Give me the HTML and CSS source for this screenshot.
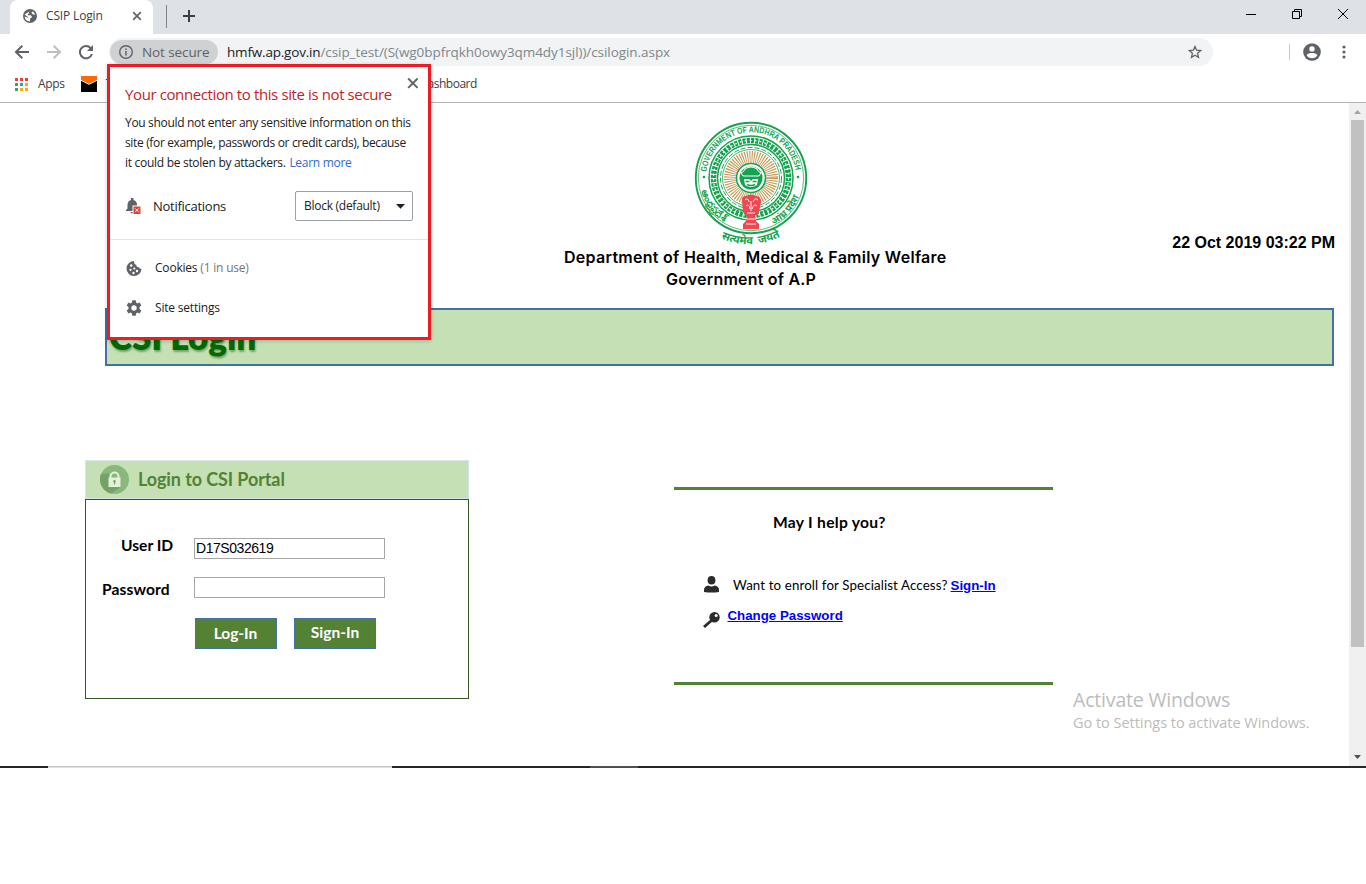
FILE: index.html
```html
<!DOCTYPE html>
<html lang="en">
<head>
<meta charset="utf-8">
<title>CSIP Login</title>
<link rel="stylesheet" href="styles.css">
</head>
<body>
<div class="window">
  <div class="tabstrip">
    <div class="tab">
      <svg class="tab-globe" viewBox="0 0 14 14"><circle cx="7" cy="7" r="7" fill="#5f6368"/><path d="M7.600 1.500 5.600 3 6.200 4.200 4.600 5.200 5 6.200H7.800L9.200 8 7.200 9.600 6.800 12.400A5.600 5.600 0 0 1 1.600 7.400L4.400 8.600 5.600 9.800 4.800 8 1.600 5.600M9 2.200 8.600 4.200 10 5.600 12.300 5.400A6 6 0 0 0 9 2.200" fill="#fff"/></svg>
      <span class="tab-title">CSIP Login</span>
      <svg class="tab-close" viewBox="0 0 10 10"><path d="M1.200 1.200 8.800 8.800M8.800 1.200 1.200 8.800" stroke="#5f6368" stroke-width="1.700"/></svg>
    </div>
    <span class="tab-divider"></span>
    <svg class="new-tab" viewBox="0 0 12 12"><path d="M6 0V12M0 6H12" stroke="#3c4043" stroke-width="2"/></svg>
    <div class="window-controls">
      <svg width="11" height="11" viewBox="0 0 11 11"><path d="M0 5.500H10" stroke="#000"/></svg>
      <svg width="11" height="11" viewBox="0 0 11 11"><path d="M.5 2.500h7v7h-7zM2.500 2.500v-2h7v7h-2" fill="none" stroke="#000"/></svg>
      <svg width="11" height="11" viewBox="0 0 11 11"><path d="M0 0l10 10M10 0l-10 10" stroke="#000"/></svg>
    </div>
  </div>

  <div class="toolbar">
    <svg class="nav" width="16" height="16" viewBox="0 0 16 16"><path d="M15 8H2M8.300 1.800 2 8 8.300 14.200" fill="none" stroke="#5f6368" stroke-width="2"/></svg>
    <svg class="nav" width="16" height="16" viewBox="0 0 16 16"><path d="M1 8H14M7.700 1.800 14 8 7.700 14.200" fill="none" stroke="#bdbfc1" stroke-width="2"/></svg>
    <svg class="nav" width="16" height="16" viewBox="0 0 16 16"><path d="M13.900 10A6.100 6.100 0 1 1 12.600 4.100" fill="none" stroke="#5f6368" stroke-width="2"/><path d="M15 1V7H9z" fill="#5f6368"/></svg>
    <div class="omnibox">
      <div class="site-chip">
        <svg width="14" height="14" viewBox="0 0 14 14"><circle cx="7" cy="7" r="6.300" fill="none" stroke="#5f6368" stroke-width="1.400"/><path d="M7 6V10.500M7 3.400V5" stroke="#5f6368" stroke-width="1.500"/></svg>
        <span>Not secure</span>
      </div>
      <span class="url"><b>hmfw.ap.gov.in</b>/csip_test/(S(wg0bpfrqkh0owy3qm4dy1sjl))/csilogin.aspx</span>
      <svg class="star" width="14" height="14" viewBox="0 0 14 14"><path d="M7 1.500 8.600 5.200 12.700 5.600 9.600 8.300 10.500 12.300 7 10.200 3.500 12.300 4.400 8.300 1.300 5.600 5.400 5.200Z" fill="none" stroke="#5f6368" stroke-width="1.300"/></svg>
    </div>
    <span class="bar-divider"></span>
    <svg class="avatar" width="18" height="18" viewBox="0 0 18 18"><circle cx="9" cy="9" r="8.800" fill="#5f6368"/><circle cx="9" cy="5.900" r="2.700" fill="#fff"/><path d="M3.600 12.300C4.300 10.500 7 9.900 9 9.900s4.700.6 5.400 2.400A6.400 6.400 0 0 1 9 15.300a6.400 6.400 0 0 1-5.400-3z" fill="#fff"/></svg>
    <svg class="dots" width="4" height="14" viewBox="0 0 4 14"><g fill="#5f6368"><circle cx="2" cy="2" r="1.600"/><circle cx="2" cy="7" r="1.600"/><circle cx="2" cy="12" r="1.600"/></g></svg>
  </div>

  <div class="bookmarks">
    <svg width="13" height="13" viewBox="0 0 13 13"><path d="M0 0h3v3H0zM5 0h3v3H5zM10 0h3v3h-3z" fill="#ea4335"/><path d="M0 5h3v3H0zM0 10h3v3H0z" fill="#34a853"/><path d="M5 5h3v3H5z" fill="#4285f4"/><path d="M10 5h3v3h-3zM5 10h3v3H5zM10 10h3v3h-3z" fill="#fbab05"/></svg>
    <span class="apps">Apps</span>
    <svg class="mail" width="16" height="16" viewBox="0 0 16 16"><path d="M0 0H16V16H0z" fill="#000"/><path d="M0 0H16V4L8 8 0 4z" fill="#ff6a00"/><path d="M0 4.300 8 8.300 16 4.300" fill="none" stroke="#fff" stroke-width="1"/></svg>
    <span class="bookmark">T</span>
    <span class="bookmark dashboard">Dashboard</span>
  </div>

  <div class="viewport">
    <main class="page">
      <header class="masthead">
        <svg class="emblem" width="124" height="128" viewBox="-62 -58 124 128">
          <defs>
            <path id="arc-top" d="M-44.800 -5A45 45 0 0 1 44.800 -5"/>
            <path id="arc-left" d="M-51 7A51.500 51.500 0 0 0 -12 50.100"/>
            <path id="arc-right" d="M19 48A51.500 51.500 0 0 0 51 7"/>
            <path id="arc-motto" d="M-31 60Q0 74 33 57"/>
          </defs>
          <g fill="none" stroke="#16a34f">
            <circle r="55.200" stroke-width="1.900"/>
            <circle r="52.700" stroke-width=".7"/>
            <circle r="42" stroke-width="1.500"/>
            <circle r="37.500" stroke-width="5.500" stroke-dasharray="3.200 1"/>
            <circle r="37.500" stroke="#fff" stroke-width="1.200" stroke-dasharray="2 3"/>
            <circle r="33.500" stroke-width="1.500"/>
            <circle r="30.500" stroke-width="1" stroke-dasharray="5 2"/>
            <circle r="28.500" stroke-width=".8"/>
          </g>
          <circle r="21" fill="none" stroke="#c49a54" stroke-width="12" stroke-dasharray="1.050 1.149"/>
          <circle r="14.500" fill="#fff" stroke="#16a34f" stroke-width="1.500"/>
          <circle r="11.500" fill="#16a34f"/>
          <path d="M-10-5Q-7-6-6-9Q0-13 6-9Q7-6 10-5L8-2H-8z" fill="#16a34f" stroke="#fff" stroke-width="1"/>
          <path d="M-7 1H-2L0 3 2 1H7L6 7Q0 11-6 7z" fill="#fff"/>
          <path d="M-5.500 3.500H-1.500M5.500 3.500H1.500M-4 6.500Q0 8.500 4 6.500" stroke="#16a34f" stroke-width="1.600" fill="none"/>
          <path d="M-9 21Q-9 18-5 18Q0 15 5 18Q10 18 10 24L8 34 4 38 5 43 8 46V51H-8V46L-5 43-4 38-8 34z" fill="#ef4651"/>
          <path d="M-6 22Q-3 19-2 24M2 24Q4 19 7 22M-5 28Q-2 25-1 31M1 31Q3 25 6 28M-4 35H4M-5 41H5M-5 46H5M0 23V33" stroke="#fff" stroke-width=".9" fill="none"/>
          <text class="emblem-name"><textPath href="#arc-top" startOffset="1" textLength="129" lengthAdjust="spacingAndGlyphs">GOVERNMENT OF ANDHRA PRADESH</textPath></text>
          <circle cx="-47" cy="-1" r="1.300" fill="#16a34f"/><circle cx="47" cy="-1" r="1.300" fill="#16a34f"/>
          <text class="emblem-local"><textPath href="#arc-left" startOffset="6">ఆంధ్రప్రదేశ్</textPath></text>
          <text class="emblem-local"><textPath href="#arc-right" startOffset="4">आंध्र प्रदेश</textPath></text>
          <text class="emblem-motto"><textPath href="#arc-motto" startOffset="1">सत्यमेव जयते</textPath></text>
        </svg>
        <div class="dept">Department of Health, Medical &amp; Family Welfare</div>
        <div class="govt">Government of A.P</div>
        <time class="clock">22 Oct 2019 03:22 PM</time>
      </header>

      <h1 class="banner"><span>CSI Login</span></h1>

      <div class="columns">
        <section class="login">
          <h2 class="login-head">
            <svg width="29" height="29" viewBox="0 0 29 29"><circle cx="14.500" cy="14.500" r="14.500" fill="#8ab87a"/><path d="M9 8.500 1 9A14.500 14.500 0 0 0 11 28.500L21 22 9 22z" fill="#75a265"/><path d="M8.500 12.500h12v9.500h-12z" fill="#e3f1da"/><path d="M10.500 13V11.500a4 4 0 0 1 8 0V13" fill="none" stroke="#e3f1da" stroke-width="2"/><circle cx="14.500" cy="16.300" r="1.200" fill="#75a265"/><path d="M14.500 16v3.500" stroke="#75a265" stroke-width="1.200"/></svg>
            <span>Login to CSI Portal</span>
          </h2>
          <div class="login-body">
            <label class="field"><span class="user-label">User ID</span><input type="text" value="D17S032619"></label>
            <label class="field second"><span class="pass-label">Password</span><input type="password"></label>
            <div class="buttons"><button type="button" class="log-in"><span>Log-In</span></button><button type="button"><span>Sign-In</span></button></div>
          </div>
        </section>

        <section class="help">
          <h2 class="help-title">May I help you?</h2>
          <div class="help-row">
            <svg class="person" width="15" height="17" viewBox="0 0 15 17"><ellipse cx="7.500" cy="4.300" rx="3.900" ry="4.300" fill="#2b2b2b"/><path d="M0 16V14Q0 10 4.500 9.500Q7.500 11.300 10.500 9.500Q15 10 15 14V16Q7.500 17.200 0 16z" fill="#2b2b2b"/></svg>
            <span class="enroll">Want to enroll for Specialist Access?</span>
            <a href="#" class="sign-link">Sign-In</a>
          </div>
          <div class="help-row change">
            <svg class="key" width="17" height="16" viewBox="0 0 17 16"><circle cx="11.500" cy="5.300" r="5.200" fill="#2b2b2b"/><path d="M9 8 1 15" stroke="#2b2b2b" stroke-width="2.800"/><circle cx="13.200" cy="3.600" r="1.500" fill="#fff"/></svg>
            <a href="#">Change Password</a>
          </div>
        </section>
      </div>
      <div class="activate"><div class="activate-title">Activate Windows</div><div class="activate-text">Go to Settings to activate Windows.</div></div>
    </main>
    <div class="scrollbar">
      <svg width="17" height="17" viewBox="0 0 17 17"><path d="M5 11 8.500 7 12 11z" fill="#a3a3a3"/></svg>
      <div class="thumb"></div>
      <svg class="down" width="17" height="17" viewBox="0 0 17 17"><path d="M5 6H12L8.500 10z" fill="#505050"/></svg>
    </div>
  </div>
  <div class="taskbar"><span class="task-light"></span><span class="task-grey"></span></div>

  <div class="site-info">
    <div class="info-main">
      <svg class="info-close" width="11" height="11" viewBox="0 0 11 11"><path d="M1.200.5 10.600 9.900M10.600.5 1.200 9.900" stroke="#5f6368" stroke-width="2"/></svg>
      <div class="info-title">Your connection to this site is not secure</div>
      <div class="info-text"><div class="l1">You should not enter any sensitive information on this</div><div class="l2">site (for example, passwords or credit cards), because</div><div class="l3">it could be stolen by attackers. <a href="#">Learn more</a></div></div>
      <div class="permission">
        <svg width="15" height="17" viewBox="0 0 15 17"><path d="M0 13V12L1.500 10.500V7Q1.500 3 5 2V0H7.500V2Q11 3 11 7V13zM4.500 14H8Q7 16 6 15.500Q5 15.500 4.500 14z" fill="#5f6368"/><path d="M6.500 7.500H15V17H6.500z" fill="#fff"/><path d="M7.500 8.500H14.500V16H7.500z" fill="#db4437"/><path d="M9.300 10.500l3.400 3.400M12.700 10.500 9.300 13.900" stroke="#fff" stroke-width="1"/></svg>
        <span class="notif">Notifications</span>
        <div class="select"><span>Block (default)</span><svg width="9" height="5" viewBox="0 0 9 5"><path d="M0 0H9L4.500 4.800z" fill="#202124"/></svg></div>
      </div>
    </div>
    <div class="info-links">
      <div class="info-row">
        <svg width="15" height="15" viewBox="0 0 15 15"><path d="M7.500 0A7.500 7.500 0 1 0 15 7.800Q12.800 8 12.400 6.200Q9.800 6.500 9.800 4Q7.200 3.500 7.500 0z" fill="#5f6368"/><g fill="#fff"><circle cx="4.700" cy="4.500" r="1.200"/><circle cx="4" cy="8.800" r="1.100"/><circle cx="7.800" cy="7.500" r="1.100"/><circle cx="10.500" cy="10" r="1.200"/><circle cx="7" cy="12" r="1.200"/></g></svg>
        <span class="cookies">Cookies <em>(1 in use)</em></span>
      </div>
      <div class="info-row">
        <svg width="16" height="16" viewBox="0 0 16 16"><path d="M6.300.3h3.400l.4 2.300 1.300.8 2.200-.9 1.700 2.900-1.800 1.500v2.200l1.800 1.500-1.700 2.900-2.200-.9-1.300.8-.4 2.300H6.300l-.4-2.300-1.300-.8-2.200.9-1.700-2.900 1.800-1.500V6.900L.7 5.400l1.700-2.900 2.200.9 1.300-.8z" fill="#5f6368"/><circle cx="8" cy="8" r="2.700" fill="#fff"/></svg>
        <span class="settings">Site settings</span>
      </div>
    </div>
  </div>
</div>
</body>
</html>
```
FILE: styles.css
```css
* { box-sizing: border-box; }
body { margin: 0; background: #fff; font-family: "Open Sans", "Noto Sans", sans-serif; color: #202124; white-space: nowrap; }
svg { display: block; flex: none; }
h1, h2 { margin: 0; }
.window { position: relative; width: 1366px; height: 768px; display: flex; flex-direction: column; overflow: hidden; }

/* Browser chrome */
.tabstrip { height: 34px; background: #dee1e6; display: flex; align-items: flex-start; padding-left: 10px; }
.tab { width: 143px; height: 34px; background: #fff; border-radius: 8px 8px 0 0; display: flex; align-items: center; padding: 0 11px 2px 13px; }
.tab-globe { width: 14px; height: 14px; }
.tab-title { margin: -2px 0 0 9px; font-size: 12px; letter-spacing: -.15px; color: #3c4043; flex: 1; }
.tab-close { width: 10px; height: 10px; }
.tab-divider { width: 1px; height: 23px; margin: 5px 0 0 13px; background: #808489; }
.new-tab { width: 12px; height: 12px; margin: 10px 0 0 16px; }
.window-controls { margin: 9px 17px 0 auto; display: flex; gap: 35px; }
.toolbar { height: 34px; display: flex; align-items: center; padding: 2px 17px 0 14px; }
.nav { margin-right: 16px; }
.omnibox { width: 1104px; height: 28px; margin-left: -1px; border-radius: 14px; background: #f1f3f4; display: flex; align-items: center; font-size: 14px; }
.site-chip { width: 108px; height: 24px; margin-left: 1px; border-radius: 12px; background: #cfd1d2; display: flex; align-items: center; gap: 9px; padding-left: 9px; color: #5f6368; font-size: 13.500px; letter-spacing: -.1px; }
.url { margin-left: 9px; color: #80868b; font-size: 13.500px; letter-spacing: -.06px; }
.url b { font-weight: 400; color: #202124; letter-spacing: -.19px; }
.star { margin: 0 11px 0 auto; }
.bar-divider { width: 1px; height: 16px; margin-left: 76px; background: #c6c8ca; }
.avatar { margin-left: 13px; }
.dots { margin-left: auto; margin-right: 3px; }
.bookmarks { height: 35px; border-bottom: 1px solid #b6b4b6; display: flex; align-items: center; padding: 0 0 2px 15px; font-size: 12px; color: #3c4043; }
.bookmarks span { margin-top: -1px; }
.apps { margin-left: 10px; letter-spacing: -.3px; }
.mail { margin: 0 9px 0 16px; }
.bookmarks .dashboard { margin-left: 307px; letter-spacing: -.5px; }

/* Page */
.viewport { height: 663px; display: flex; }
.page { width: 1349px; }
.masthead { height: 205px; display: grid; grid-template-columns: 564px 382px 1fr; grid-template-rows: 143px 22px 22px; font-family: Inter, sans-serif; font-weight: 600; color: #000; }
.emblem { grid-column: 2; grid-row: 1; margin: 17px 0 0 125px; }
.dept { grid-column: 2; grid-row: 2; font-size: 16px; line-height: 22px; letter-spacing: .28px; }
.govt { grid-column: 2; grid-row: 3; font-size: 16px; line-height: 22px; margin-left: 102px; letter-spacing: .2px; }
.clock { grid-column: 3; grid-row: 1; justify-self: end; align-self: end; margin: 0 14px -7px 0; font: bold 16px/20px "Liberation Sans", sans-serif; }
.emblem-name { font: bold 8.500px "Liberation Sans", sans-serif; fill: #16a34f; }
.emblem-local { font: bold 9.500px "Noto Sans", sans-serif; fill: #16a34f; }
.emblem-motto { font: bold 11.200px "Noto Sans", sans-serif; word-spacing: 3px; fill: #16a34f; }
.banner { width: 1229px; height: 58px; margin-left: 105px; border: 2px solid #4171a5; background: #c5e0b4; padding-left: 2px; font: 800 35px/53px Lato, sans-serif; color: #006a00; text-shadow: 1px 2px 2px #7ba06f; }
.columns { display: flex; padding: 94px 0 0 85px; }
.login { width: 384px; }
.login-head { height: 39px; border: 1px solid #d5e4ee; background: #c5e0b4; display: flex; align-items: center; gap: 9px; padding-left: 14px; font: bold 18px Lato, sans-serif; letter-spacing: -.1px; color: #548235; }
.login-head span { margin-top: -1px; }
.login-body { height: 200px; border: 1px solid #375623; padding-top: 38px; }
.field { display: flex; height: 21px; align-items: flex-start; font: bold 15.600px/16px Lato, sans-serif; color: #000; }
.field span { width: 108px; }
.field .user-label { padding-left: 35px; margin-top: -1px; }
.pass-label { padding: 4px 0 0 16px; letter-spacing: .1px; }
.field input { width: 191px; height: 21px; border: 1px solid #a6a6a6; padding: 0 1px 1px; font: 14px "Liberation Sans", sans-serif; letter-spacing: -.45px; border-radius: 0; background: #fff; color: #000; }
.second { margin-top: 18px; }
.buttons { display: flex; gap: 17px; margin: 20px 0 0 109px; }
.buttons button { width: 82px; height: 31px; padding: 0 0 4px; border: 1px solid #4171a5; border-radius: 0; background: #548235; color: #fff; font: bold 15.500px Lato, sans-serif; }
.buttons .log-in { padding: 0 1px 2px 0; }
.help { width: 379px; height: 198px; margin: 27px 0 0 205px; border-top: 3px solid #548235; border-bottom: 3px solid #548235; color: #000; }
.help-title { margin: 21px 0 0 99px; font: bold 15.600px/22px Lato, sans-serif; letter-spacing: .3px; }
.help-row { display: flex; align-items: center; height: 20px; margin: 42px 0 0 30px; font: 13.300px/20px Lato, sans-serif; }
.help-row a { color: #00f; font: bold 13.300px/20px "Liberation Sans", sans-serif; padding-top: 1px; }
.person { margin-top: -2px; }
.enroll { margin: 0 3px 0 14px; letter-spacing: .12px; }
.change { margin-top: 10px; }
.change .key { margin: 9px 0 0 -1px; }
.change a { margin-left: 7.500px; }
.activate { margin: -12px 0 0 1073px; color: #bcbcbc; }
.activate-title { font-size: 19.500px; line-height: 26px; letter-spacing: -.18px; }
.activate-text { font-size: 14.500px; line-height: 20px; letter-spacing: -.03px; }
.scrollbar { width: 17px; background: #f0f0f0; display: flex; flex-direction: column; }
.thumb { width: 13px; height: 527px; margin-left: 2px; background: #c1c1c1; }
.down { margin-top: auto; }
.taskbar { height: 2px; background: #262626; display: flex; }
.task-light { width: 344px; margin-left: 48px; background: #e0e0e0; border-top: 1px solid #c4c4c4; }
.task-grey { width: 48px; margin-left: 198px; background: #505050; }

/* Site information popup over the page */
.site-info { position: absolute; left: 107px; top: 64px; width: 324px; height: 276px; border: 3px solid #ed1c24; background: #fff; box-shadow: 0 1px 4px #0003; }
.info-main { height: 173px; border-bottom: 1px solid #e4e4e4; padding: 16px 15px 0; }
.info-close { position: absolute; right: 10px; top: 11px; }
.info-title { font-size: 15px; line-height: 22px; letter-spacing: -.39px; color: #c5221f; }
.info-text { margin-top: 8px; font-size: 12px; line-height: 20px; letter-spacing: -.32px; }
.l2 { letter-spacing: -.35px; }
.l3 { letter-spacing: -.29px; }
.l3 a { margin-left: 1px; }
.info-text a { color: #3367d6; text-decoration: none; }
.permission { display: flex; align-items: center; height: 30px; margin-top: 18px; padding-left: 1px; }
.notif { margin-left: 12px; font-size: 13px; letter-spacing: -.27px; }
.select { margin-left: auto; width: 118px; height: 30px; border: 1px solid #9aa0a6; border-radius: 2px; display: flex; align-items: center; justify-content: space-between; padding: 0 7px 0 8px; font-size: 12px; letter-spacing: -.27px; }
.select span { margin-top: -1px; }
.info-links { padding: 8px 0 0 16px; }
.info-row { height: 40px; display: flex; align-items: center; gap: 13px; font-size: 12px; letter-spacing: -.2px; }
.info-row span { margin-top: -1px; }
.info-row svg { width: 16px; }
.info-row em { font-style: normal; color: #757575; }
```
